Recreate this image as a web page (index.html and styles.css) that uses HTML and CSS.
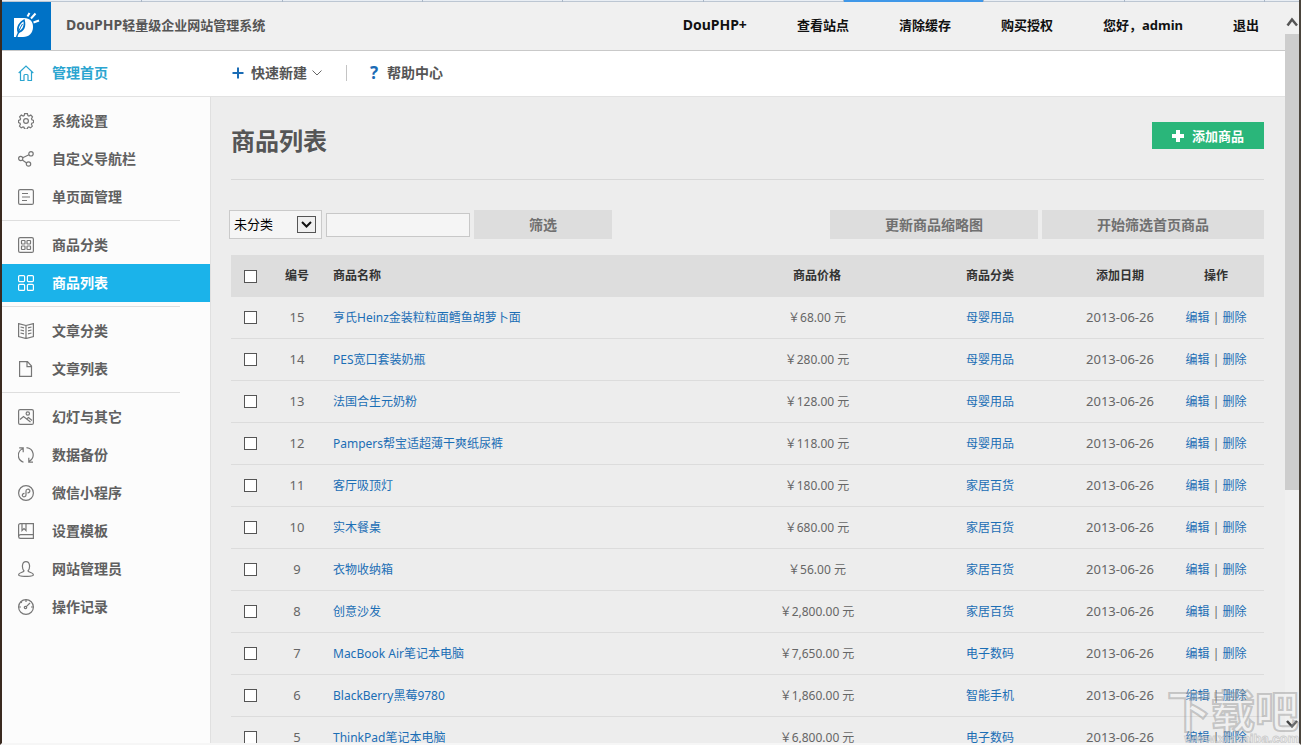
FILE: index.html
```html
<!DOCTYPE html>
<html lang="zh-CN">
<head>
<meta charset="utf-8">
<title>DouPHP 商品列表</title>
<link rel="stylesheet" href="styles.css">
</head>
<body>
<div class="tabstrip"><i></i><i></i><i></i><i></i><i></i><i></i><i class="on"></i><i></i><i></i><i class="rest"></i></div>
<div class="window">
  <div class="page">
    <header class="topbar">
      <a class="logo" href="#" aria-label="DouPHP">
        <svg viewBox="0 0 49 48" width="49" height="48">
          <path fill="#fff" d="M12 16h10c6 0 9 3.500 9 9 0 6-4 10-10 10h-9z"/>
          <path fill="#0072c6" d="M14 35c.5-2 1-3 1.700-4.300C13.500 25 17 20 22.500 17c1.500 5 1.500 11-4.500 13.500-1 .5-2 2-2.500 4.500z"/>
          <path fill="#fff" d="M17 29c-1-4 1.500-7.500 4.500-9.500.5 4-.5 7.500-4.500 9.500z"/>
          <path stroke="#0072c6" stroke-width="1" fill="none" d="M16.500 30c1-3 2.500-5.500 4-8"/>
          <path stroke="#fff" stroke-width="2" fill="none" d="M25.500 14.500l2-3.500M29 16.500l4.500-5M31.500 20.500l5.500-2"/>
        </svg>
      </a>
      <strong class="brand"><span class="latin">DouPHP</span>轻量级企业网站管理系统</strong>
      <nav class="topnav">
        <a class="latin" href="#">DouPHP+</a><a href="#">查看站点</a><a href="#">清除缓存</a><a href="#">购买授权</a><a href="#">您好<span class="comma">，</span>admin</a><a href="#">退出</a>
      </nav>
    </header>
    <div class="toolbar">
      <a class="item home" href="#"><svg class="ico" viewBox="0 0 16 16"><path d="M.7 8L8 1l7.300 7M2.500 6.500v9h3.500v-5q0-1 1-1h2q1 0 1 1v5h3.500v-9"/></svg>管理首页</a>
      <div class="quick">
        <button class="tool" type="button"><svg width="12" height="12" viewBox="0 0 12 12"><path d="M6 .5v11M.5 6h11" stroke="#1a6cb5" stroke-width="2"/></svg><span class="new">快速新建</span><svg width="10" height="6" viewBox="0 0 10 6"><path d="M.5.500l4.500 4.500L9.500.5" fill="none" stroke="#666"/></svg></button>
        <span class="bar"></span>
        <a class="tool" href="#"><span class="q">?</span>帮助中心</a>
      </div>
    </div>
    <div class="body">
      <aside class="sidebar">
        <nav>
        <ul>
          <li><a class="item" href="#"><svg class="ico" viewBox="0 0 16 16"><path d="M6.600.6h2.800l.5 2 1 .5 1.900-1 1.700 1.800-1 1.800.4 1 1.700.8v2l-1.800.7-.4 1 .9 1.900-1.700 1.700-1.800-.9-1 .5-.5 1.600H6.600l-.6-1.700-1-.4-1.800.9-1.700-1.700.9-1.900-.4-1L.5 9.500v-2l1.700-.8.4-1-1-1.800 1.700-1.800 1.900 1 1-.5z"/><circle cx="8" cy="8" r="2.400"/></svg>系统设置</a></li>
          <li><a class="item" href="#"><svg class="ico" viewBox="0 0 16 16"><circle cx="2.700" cy="7.500" r="2.100"/><circle cx="13" cy="2.800" r="2.200"/><circle cx="10.500" cy="13" r="2.200"/><path d="M4.700 6.700l6.300-3M4.300 8.900l4.300 3"/></svg>自定义导航栏</a></li>
          <li><a class="item" href="#"><svg class="ico" viewBox="0 0 16 16"><rect x=".6" y=".6" width="14.800" height="14.800" rx="1.500"/><path d="M4 4.500h6M4 8h8M4 11.500h5"/></svg>单页面管理</a></li>
        </ul>
        <ul>
          <li><a class="item" href="#"><svg class="ico" viewBox="0 0 16 16"><rect x=".6" y=".6" width="14.800" height="14.800" rx="1.500"/><rect x="3.500" y="3.500" width="3.500" height="3.500" rx=".5"/><rect x="9" y="3.500" width="3.500" height="3.500" rx=".5"/><rect x="3.500" y="9" width="3.500" height="3.500" rx=".5"/><rect x="9" y="9" width="3.500" height="3.500" rx=".5"/></svg>商品分类</a></li>
          <li><a class="item active" href="#"><svg class="ico" viewBox="0 0 16 16"><rect x=".6" y=".6" width="6" height="6" rx="1"/><rect x="9.400" y=".6" width="6" height="6" rx="1"/><rect x=".6" y="9.400" width="6" height="6" rx="1"/><rect x="9.400" y="9.400" width="6" height="6" rx="1"/></svg>商品列表</a></li>
        </ul>
        <ul>
          <li><a class="item" href="#"><svg class="ico" viewBox="0 0 16 16"><path d="M8 2.500L.6.600v13L8 15.500l7.400-1.900V.6zM8 2.500v13M2.500 4l3.500.9M2.500 7l3.500.9M2.500 10l3.500.9M13.500 4l-3.500.9M13.500 7l-3.500.9M13.500 10l-3.500.9"/></svg>文章分类</a></li>
          <li><a class="item" href="#"><svg class="ico" viewBox="0 0 16 16"><path d="M1.600.6h7.900l4 4.400v10.400H1.600zM9 .6v5h4.500"/></svg>文章列表</a></li>
        </ul>
        <ul>
          <li><a class="item" href="#"><svg class="ico" viewBox="0 0 16 16"><rect x=".6" y=".6" width="14.800" height="14.800" rx="1.500"/><circle cx="9.800" cy="4.500" r="1.700"/><path d="M2 10.500l3.500-3 7 5.500M8.500 10l2-1.500 3.500 3"/></svg>幻灯与其它</a></li>
          <li><a class="item" href="#"><svg class="ico" viewBox="0 0 16 16"><path d="M5.500 15.200C-1 13-1.500 4.500 4.800 1.500M1.200.8H5.200v4.500M8.500.6c7.500.8 9 10 2.800 13.700M15 15.200h-4.200v-4.500"/></svg>数据备份</a></li>
          <li><a class="item" href="#"><svg class="ico" viewBox="0 0 16 16"><circle cx="8" cy="8" r="7.400"/><path d="M9.500 7.800c2.200 0 2.700-1.600 2.200-2.500C10.700 3.600 8 4 8 6v4c0 2-2.700 2.400-3.500 1-.6-1 .1-2.600 2-2.600"/></svg>微信小程序</a></li>
          <li><a class="item" href="#"><svg class="ico" viewBox="0 0 16 16"><path d="M15.400 15.400H2.500a2 2 0 0 1-1.900-2V2.500Q.6.600 2.500.6h12.900zM.8 13q.3-1.300 1.900-1.300h12.700M4 .6v6.900l2-2 2 2V.6"/></svg>设置模板</a></li>
          <li><a class="item" href="#"><svg class="ico" viewBox="0 0 16 16"><path d="M6 10C3.800 7.500 3.500.6 8 .6S12.200 7.500 10 10c1 1.700 5.400 1.500 5.400 3.700 0 2.300-14.800 2.300-14.800 0C.6 11.500 5 11.700 6 10z"/></svg>网站管理员</a></li>
          <li><a class="item" href="#"><svg class="ico" viewBox="0 0 16 16"><circle cx="8" cy="8" r="7.400"/><circle cx="7.500" cy="8.500" r="1.200"/><path d="M8.300 7.700L12 4M8 .6V3M.6 8H3M13 8h2.400M2.800 2.800l1 1"/></svg>操作记录</a></li>
        </ul>
        </nav>
      </aside>
      <main class="main">
        <div class="heading">
          <h1>商品列表</h1>
          <a class="add" href="#"><svg width="12" height="12" viewBox="0 0 12 12"><path d="M6 0v12M0 6h12" stroke="#fff" stroke-width="4"/></svg>添加商品</a>
        </div>
        <form class="filter">
          <label class="pick"><select aria-label="分类"><option>未分类</option></select><svg width="19" height="17" viewBox="0 0 19 17"><rect x=".5" y=".5" width="18" height="16" fill="#efefef" stroke="#555"/><path d="M5 6l4.500 4.500L14 6" fill="none" stroke="#111" stroke-width="2"/></svg></label>
          <input class="word" type="text" aria-label="关键词">
          <button class="btn find" type="button">筛选</button>
          <span class="gap"></span>
          <button class="btn thumb" type="button">更新商品缩略图</button>
          <button class="btn pickhome" type="button">开始筛选首页商品</button>
        </form>
        <table class="list">
          <colgroup><col class="c1"><col class="c2"><col><col class="c4"><col class="c5"><col class="c6"><col class="c7"></colgroup>
          <thead><tr><th class="check"><input type="checkbox" aria-label="全选"></th><th>编号</th><th class="name">商品名称</th><th>商品价格</th><th>商品分类</th><th>添加日期</th><th>操作</th></tr></thead>
          <tbody>
          <tr><td class="check"><input type="checkbox" aria-label="15"></td><td class="num">15</td><td class="name"><a href="#">亨氏Heinz金装粒粒面鳕鱼胡萝卜面</a></td><td>￥68.00 元</td><td><a href="#">母婴用品</a></td><td class="num">2013-06-26</td><td><a href="#">编辑</a> | <a href="#">删除</a></td></tr>
          <tr><td class="check"><input type="checkbox" aria-label="14"></td><td class="num">14</td><td class="name"><a href="#">PES宽口套装奶瓶</a></td><td>￥280.00 元</td><td><a href="#">母婴用品</a></td><td class="num">2013-06-26</td><td><a href="#">编辑</a> | <a href="#">删除</a></td></tr>
          <tr><td class="check"><input type="checkbox" aria-label="13"></td><td class="num">13</td><td class="name"><a href="#">法国合生元奶粉</a></td><td>￥128.00 元</td><td><a href="#">母婴用品</a></td><td class="num">2013-06-26</td><td><a href="#">编辑</a> | <a href="#">删除</a></td></tr>
          <tr><td class="check"><input type="checkbox" aria-label="12"></td><td class="num">12</td><td class="name"><a href="#">Pampers帮宝适超薄干爽纸尿裤</a></td><td>￥118.00 元</td><td><a href="#">母婴用品</a></td><td class="num">2013-06-26</td><td><a href="#">编辑</a> | <a href="#">删除</a></td></tr>
          <tr><td class="check"><input type="checkbox" aria-label="11"></td><td class="num">11</td><td class="name"><a href="#">客厅吸顶灯</a></td><td>￥180.00 元</td><td><a href="#">家居百货</a></td><td class="num">2013-06-26</td><td><a href="#">编辑</a> | <a href="#">删除</a></td></tr>
          <tr><td class="check"><input type="checkbox" aria-label="10"></td><td class="num">10</td><td class="name"><a href="#">实木餐桌</a></td><td>￥680.00 元</td><td><a href="#">家居百货</a></td><td class="num">2013-06-26</td><td><a href="#">编辑</a> | <a href="#">删除</a></td></tr>
          <tr><td class="check"><input type="checkbox" aria-label="9"></td><td class="num">9</td><td class="name"><a href="#">衣物收纳箱</a></td><td>￥56.00 元</td><td><a href="#">家居百货</a></td><td class="num">2013-06-26</td><td><a href="#">编辑</a> | <a href="#">删除</a></td></tr>
          <tr><td class="check"><input type="checkbox" aria-label="8"></td><td class="num">8</td><td class="name"><a href="#">创意沙发</a></td><td>￥2,800.00 元</td><td><a href="#">家居百货</a></td><td class="num">2013-06-26</td><td><a href="#">编辑</a> | <a href="#">删除</a></td></tr>
          <tr><td class="check"><input type="checkbox" aria-label="7"></td><td class="num">7</td><td class="name"><a href="#">MacBook Air笔记本电脑</a></td><td>￥7,650.00 元</td><td><a href="#">电子数码</a></td><td class="num">2013-06-26</td><td><a href="#">编辑</a> | <a href="#">删除</a></td></tr>
          <tr><td class="check"><input type="checkbox" aria-label="6"></td><td class="num">6</td><td class="name"><a href="#">BlackBerry黑莓9780</a></td><td>￥1,860.00 元</td><td><a href="#">智能手机</a></td><td class="num">2013-06-26</td><td><a href="#">编辑</a> | <a href="#">删除</a></td></tr>
          <tr><td class="check"><input type="checkbox" aria-label="5"></td><td class="num">5</td><td class="name"><a href="#">ThinkPad笔记本电脑</a></td><td>￥6,800.00 元</td><td><a href="#">电子数码</a></td><td class="num">2013-06-26</td><td><a href="#">编辑</a> | <a href="#">删除</a></td></tr>
          </tbody>
        </table>
      </main>
    </div>
  </div>
  <div class="scroll">
    <svg width="14" height="32" viewBox="0 0 14 32"><path d="M2.500 23.500L7 17.500l5 6" fill="none" stroke="#555" stroke-width="2.500"/></svg>
    <div class="knob"></div>
    <div class="track"></div>
    <svg width="14" height="30" viewBox="0 0 14 30"><path d="M2 8l5 5.500L12 8" fill="none" stroke="#444" stroke-width="2.500"/></svg>
  </div>
</div>
<div class="mark"><span class="big">下载吧</span><span class="site">www.xiazaiba.com</span></div>
</body>
</html>
```
FILE: styles.css
```css
* { box-sizing: border-box; }
body {
  margin: 0;
  height: 100vh;
  overflow: hidden;
  display: flex;
  flex-direction: column;
  position: relative;
  border-left: 2px solid #3a2a20;
  border-right: 2px solid #4a443c;
  border-bottom: 2px solid #f6f6f6;
  background: #ededed;
  color: #666;
  font: 12px/20px "Noto Sans", "Noto Sans CJK SC", sans-serif;
}
a { color: #1b6eb5; text-decoration: none; }
ul { list-style: none; margin: 0; padding: 0; }
button, input, select { font: inherit; margin: 0; }

.tabstrip { display: flex; flex: none; height: 2px; background: #e9eef4; border-bottom: 1px solid #bcc6d2; }
.tabstrip i { flex: 140 1 0; border-right: 1px solid #a9b6c6; height: 2px; }
.tabstrip .on { background: #3f97e8; }
.tabstrip .rest { flex-grow: 34; border: 0; }

.window { flex: 1; min-height: 0; display: flex; }
.page { flex: 1; min-width: 0; display: flex; flex-direction: column; }

.topbar { flex: 0 0 49px; display: flex; align-items: center; background: #f0f0f0; border-bottom: 1px solid #c9c9c9; font-size: 13px; }
.logo { flex: none; width: 49px; height: 48px; background: #0072c6; }
.logo svg { display: block; }
.brand { margin-left: 15px; padding-bottom: 2px; color: #555; white-space: nowrap; }
.topnav { margin-left: auto; padding: 0 26px 2px 0; display: flex; gap: 50px; font-weight: 700; white-space: nowrap; }
.topnav a { color: #111; }
.latin { font-size: 14px; }
.comma { font-family: "Noto Sans CJK TC", sans-serif; }

.toolbar { flex: 0 0 46px; display: flex; align-items: center; padding-bottom: 1px; background: #fff; border-bottom: 1px solid #e2e2e2; font-size: 14px; }
.item { display: flex; align-items: center; height: 38px; padding-left: 16px; gap: 18px; color: #606060; font-size: 14px; font-weight: 700; white-space: nowrap; }
.ico { flex: none; width: 16px; height: 16px; fill: none; stroke: #777; stroke-width: 1.2; }
.home { width: 209px; color: #2ba5d0; }
.home .ico { stroke: #2ba5d0; }
.quick { display: flex; align-items: center; padding-left: 21px; }
.tool { display: flex; align-items: center; border: 0; padding: 0; background: none; color: #555; font-weight: 700; }
.new { margin: 0 5px 0 7px; }
.bar { width: 1px; height: 16px; margin: 0 23px 0 24px; background: #c4c4c4; }
.q { width: 17px; color: #1a6cb5; font-size: 17px; font-weight: 700; }

.body { flex: 1; min-height: 0; display: flex; overflow: hidden; }
.sidebar { flex: 0 0 209px; padding-top: 5px; background: #fcfcfc; border-right: 1px solid #e0e0e0; }
.sidebar ul + ul { margin-top: 4px; padding-top: 5px; border-top: 1px solid #dedede; border-image: linear-gradient(90deg, #dedede 177px, transparent 177px) 1; }
.sidebar .active { background: #1bb3ea; color: #fff; }
.active .ico { stroke: #fff; }

.main { flex: 1; min-width: 0; padding: 0 21px 0 20px; }
.heading { display: flex; justify-content: space-between; align-items: flex-start; height: 83px; padding-top: 25px; border-bottom: 1px solid #d8d8d8; }
h1 { margin: 0; font-size: 24px; line-height: 38px; color: #555; }
.add { display: flex; align-items: center; justify-content: center; gap: 8px; width: 112px; height: 27px; background: #2ab67a; color: #fff; font-size: 13px; font-weight: 700; }

.filter { display: flex; align-items: center; gap: 4px; margin: 30px 0 16px -2px; }
.pick { position: relative; width: 93px; height: 29px; }
.pick select { width: 100%; height: 100%; padding: 0 4px 2px; appearance: none; border: 1px solid #cacaca; border-radius: 0; background: #f5f5f5; color: #000; font-size: 13px; }
.pick svg { position: absolute; right: 6px; top: 6px; pointer-events: none; }
.word { width: 144px; height: 24px; border: 1px solid #c8c8c8; background: #f5f5f5; }
.btn { height: 29px; border: 0; padding: 0; background: #ddd; color: #707070; font-size: 14px; font-weight: 700; }
.find { width: 138px; }
.gap { flex: 1; }
.thumb { width: 208px; }
.pickhome { width: 222px; }

.list { width: 100%; table-layout: fixed; border-collapse: separate; border-spacing: 0; }
.c1 { width: 40px; } .c2 { width: 52px; } .c4 { width: 182px; } .c5 { width: 164px; } .c6 { width: 96px; } .c7 { width: 96px; }
th, td { height: 42px; padding: 0; text-align: center; white-space: nowrap; }
th { background: #ddd; color: #333; font-weight: 700; }
td { border-bottom: 1px solid #dcdcdc; }
.list .name { text-align: left; padding-left: 10px; }
.list .check { padding-right: 2px; }
.list .num { padding-bottom: 2px; font-size: 13px; }
.list input { display: block; margin: 0 auto; width: 13px; height: 13px; appearance: none; border: 1px solid #555; background: #fff; }

.scroll { flex: 0 0 14px; display: flex; flex-direction: column; background: #f0f0f0; }
.scroll svg { flex: none; }
.knob { flex: 456; background: #cdcdcd; }
.track { flex: 223; }

.mark { position: absolute; right: 0; bottom: -2px; width: 132px; height: 60px; display: flex; flex-direction: column; align-items: flex-end; pointer-events: none; white-space: nowrap; }
.big { font: 700 44px/48px "Noto Sans CJK SC", sans-serif; color: rgba(255, 255, 255, .2); -webkit-text-stroke: 2px rgba(130, 130, 130, .4); }
.site { font: 700 13px/12px "Liberation Sans", sans-serif; color: rgba(255, 255, 255, .5); -webkit-text-stroke: 1px rgba(150, 150, 150, .4); }
```
